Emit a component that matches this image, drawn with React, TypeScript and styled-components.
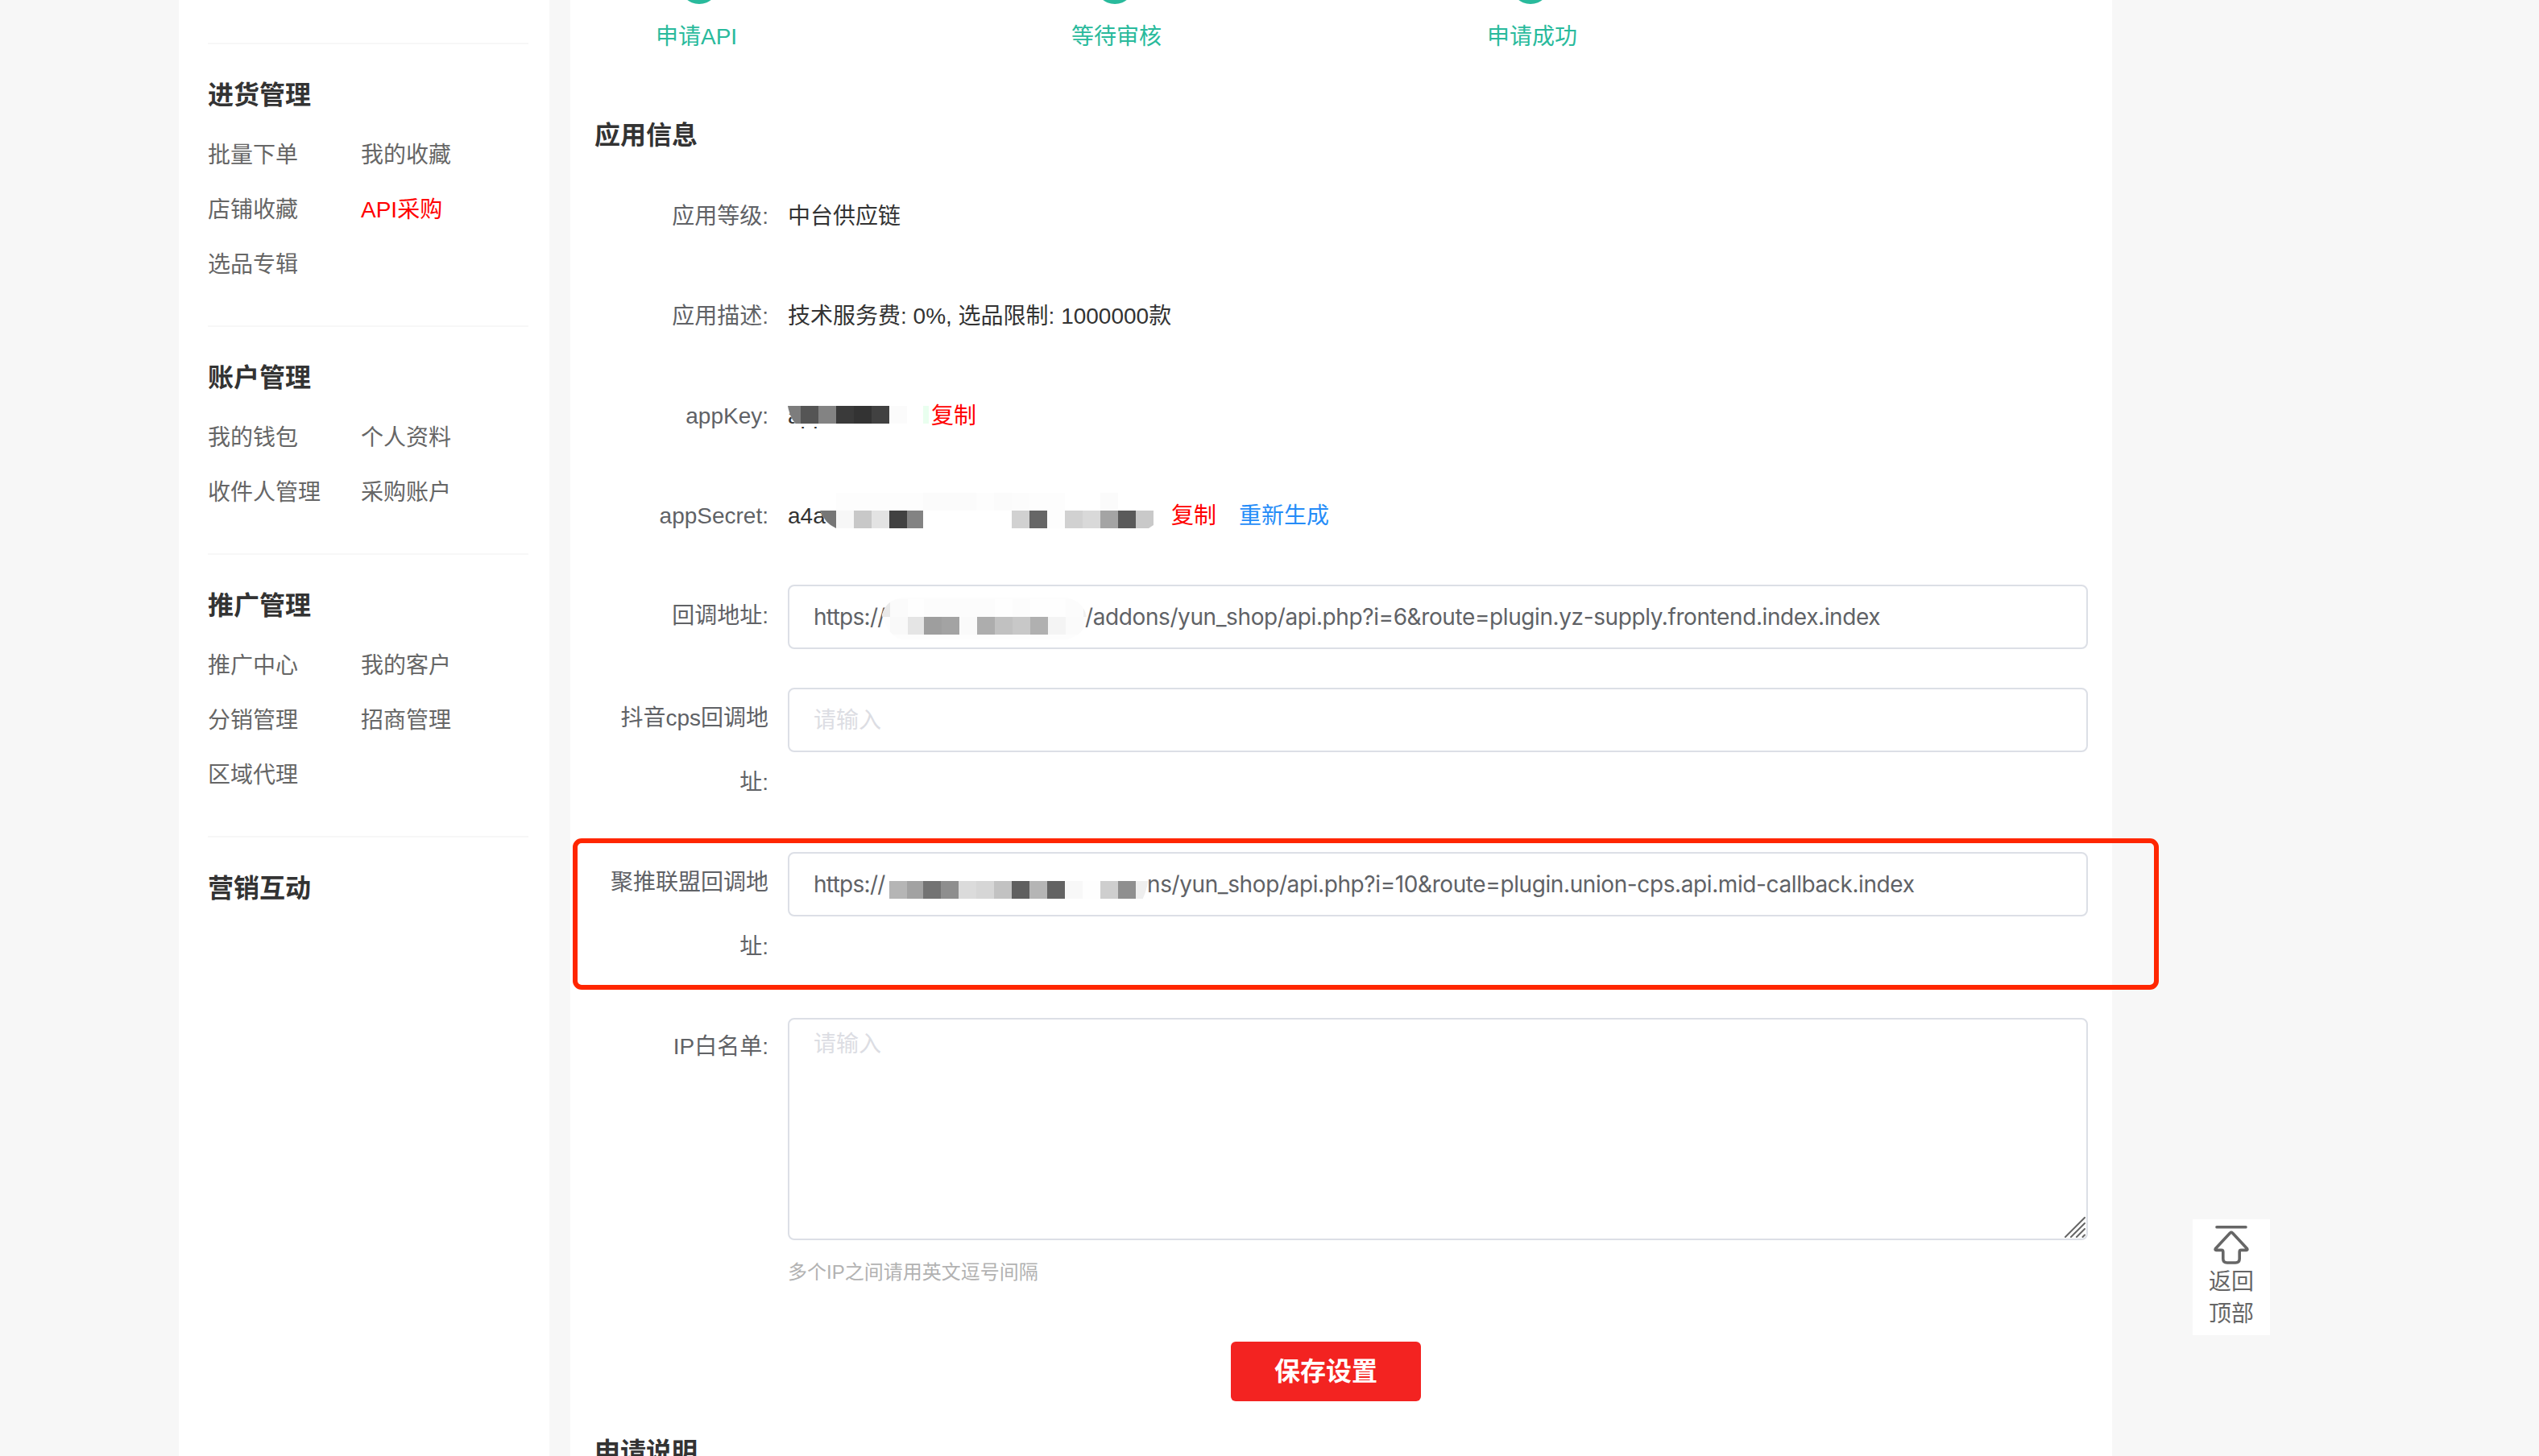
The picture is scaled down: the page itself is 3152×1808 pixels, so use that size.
import styled, { createGlobalStyle } from 'styled-components'

const GlobalStyle = createGlobalStyle`
  * {
    box-sizing: border-box;
  }

  body {
    margin: 0;
    background-color: #f7f7f7;
    color: #333;
    font-family: 'Liberation Sans', 'Noto Sans CJK SC', sans-serif;
    font-size: 28px;
  }
`

const Page = styled.div`
  position: relative;
  display: flex;
  gap: 26px;
  width: 3152px;
  height: 1808px;
  padding-left: 222px;
  overflow: hidden;
`

const Sidebar = styled.aside`
  width: 460px;
  height: 100%;
  padding: 53px 26px 0 36px;
  background-color: #fff;
`

const MenuSection = styled.section`
  padding: 41px 0;
  border-top: 2px solid #f7f7f7;
`

const MenuTitle = styled.h3`
  margin: 0 0 19px;
  font-size: 32px;
  font-weight: bold;
  line-height: 44px;
`

const MenuList = styled.div`
  display: grid;
  grid-template-columns: 190px 190px;
  grid-auto-rows: 68px;
`

const MenuLink = styled.a<{ $active?: boolean }>`
  color: ${(props) => (props.$active ? '#ff0000' : '#666')};
  line-height: 68px;
  white-space: nowrap;
`

const Main = styled.main`
  width: 1914px;
  height: 100%;
  padding: 0 30px;
  background-color: #fff;
`

const Steps = styled.div`
  display: flex;
  height: 146px;
  margin-left: 76px;
`

const Step = styled.div`
  width: 516px;
  color: #29ba9c;

  span {
    display: block;
    margin-top: 21px;
    line-height: 40px;
  }
`

const StepDot = styled.div`
  width: 48px;
  height: 48px;
  margin: -43px 0 0 30px;
  border-radius: 50%;
  background-color: #29ba9c;
`

const SectionTitle = styled.h2`
  margin: 0;
  font-size: 32px;
  font-weight: bold;
  line-height: 44px;
`

const Form = styled.div`
  padding-top: 39px;
`

const FormItem = styled.div`
  display: flex;
  margin-bottom: 44px;
`

const Label = styled.label`
  flex: none;
  width: 240px;
  padding-right: 24px;
  color: #606266;
  line-height: 80px;
  text-align: right;
`

const Value = styled.div`
  position: relative;
  display: flex;
  height: 80px;
  line-height: 80px;
`

const Action = styled.a<{ $color: string; $gap: number }>`
  margin-left: ${(props) => props.$gap}px;
  color: ${(props) => props.$color};
`

const MaskedText = styled.span<{ $width: number }>`
  width: ${(props) => props.$width}px;
`

const InputBox = styled.div<{ $offset: number }>`
  position: relative;
  display: flex;
  width: 1614px;
  height: 80px;
  margin: ${(props) => `${props.$offset}px 0 ${3 - props.$offset}px`};
  padding: 0 30px;
  border: 2px solid #dcdfe6;
  border-radius: 8px;
  color: #606266;
  font-family: Inter, 'Noto Sans CJK SC', sans-serif;
  letter-spacing: -0.4px;
  line-height: 77px;
  white-space: nowrap;
`

const UrlPrefix = styled.span<{ $width: number }>`
  flex: none;
  width: ${(props) => props.$width}px;
  letter-spacing: -0.7px;
`

const Input = styled.input`
  width: 100%;
  padding: 2px 0 0;
  border: 0;
  outline: 0;
  background: none;
  color: #606266;
  font: 28px 'Liberation Sans', 'Noto Sans CJK SC', sans-serif;

  &::placeholder {
    color: #dcdde3;
  }
`

const TextareaBox = styled.div`
  position: relative;
  width: 1614px;
  height: 276px;
  margin-top: 4px;
`

const Textarea = styled.textarea`
  display: block;
  width: 100%;
  height: 100%;
  padding: 10px 30px;
  border: 2px solid #dcdfe6;
  border-radius: 8px;
  outline: 0;
  resize: none;
  color: #606266;
  font: inherit;
  line-height: 42px;

  &::placeholder {
    color: #dcdde3;
  }
`

const ResizeGrip = styled.svg`
  position: absolute;
  right: 3px;
  bottom: 3px;
`

const Tip = styled.p`
  margin: 23px 0 0;
  color: #b2b2b2;
  font-size: 24px;
  line-height: 34px;
`

const SaveButton = styled.button`
  display: block;
  width: 236px;
  height: 74px;
  margin: 69px 0 41px 790px;
  padding: 0;
  border: 0;
  border-radius: 6px;
  background-color: #f32321;
  color: #fff;
  font: bold 32px / 74px 'Liberation Sans', 'Noto Sans CJK SC', sans-serif;
`

const Highlight = styled.div`
  position: absolute;
  top: 1041px;
  left: 711px;
  width: 1969px;
  height: 188px;
  border: 6px solid #ff2600;
  border-radius: 11px;
`

const BackTop = styled.div`
  position: absolute;
  top: 1514px;
  left: 2722px;
  display: flex;
  flex-direction: column;
  align-items: center;
  width: 96px;
  height: 144px;
  padding-top: 6px;
  background-color: #fff;
  color: #666;
  line-height: 40px;
  text-align: center;

  span {
    width: 56px;
  }
`

const MosaicSvg = styled.svg<{ $left: number; $top: number }>`
  position: absolute;
  top: ${(props) => props.$top}px;
  left: ${(props) => props.$left}px;
`

// [x, width, colour] of each block
type Cell = [number, number, string]

interface MosaicProps {
  id: string
  left: number
  top: number
  width: number
  height: number
  outline: string
  rowY: number
  cells: Cell[]
  upper?: Cell[]
  fill?: string
}

function Mosaic({
  id,
  left,
  top,
  width,
  height,
  outline,
  rowY,
  cells,
  upper = [],
  fill = '#fff',
}: MosaicProps) {
  return (
    <MosaicSvg $left={left} $top={top} width={width} height={height}>
      <clipPath id={id}>
        <path d={outline} />
      </clipPath>
      <g clipPath={`url(#${id})`} shapeRendering="crispEdges">
        <rect width={width} height={height} fill={fill} />
        {upper.map(([x, w, color]) => (
          <rect key={x} x={x} y={rowY - 22} width={w} height={22} fill={color} />
        ))}
        {cells.map(([x, w, color]) => (
          <rect key={x} x={x} y={rowY} width={w} height={22} fill={color} />
        ))}
      </g>
    </MosaicSvg>
  )
}

const keyCells: Cell[] = [
  [0, 16, '#7d7d7d'],
  [16, 22, '#555555'],
  [38, 22, '#838383'],
  [60, 22, '#3a3a3a'],
  [82, 22, '#333333'],
  [104, 22, '#414141'],
  [126, 22, '#fbfbfb'],
  [168, 7, '#e9ffef'],
]

const secretUpper: Cell[] = [
  [22, 108, '#fdfdfd'],
  [130, 66, '#fbfbfb'],
  [196, 22, '#fdfdfd'],
  [218, 22, '#fbfbfb'],
  [240, 22, '#fcfcfc'],
  [262, 44, '#fdfdfd'],
  [350, 22, '#fbfbfb'],
]

const secretCells: Cell[] = [
  [0, 22, '#767676'],
  [22, 22, '#f7f7f7'],
  [44, 22, '#c8c8c8'],
  [66, 22, '#e3e3e3'],
  [88, 22, '#414141'],
  [110, 20, '#838383'],
  [240, 22, '#d1d1d1'],
  [262, 22, '#666666'],
  [284, 22, '#fdfdfd'],
  [306, 22, '#d1d1d1'],
  [328, 22, '#d9d9d9'],
  [350, 22, '#a4a4a4'],
  [372, 22, '#5a5a5a'],
  [394, 22, '#c9c9c9'],
]

const callbackUpper: Cell[] = [
  [0, 10, '#e9e9e9'],
  [10, 22, '#fbfbfb'],
  [32, 20, '#fefefe'],
  [52, 88, '#fcfcfc'],
  [140, 22, '#fefefe'],
  [162, 22, '#fcfcfc'],
  [184, 44, '#fefefe'],
  [228, 22, '#fcfcfc'],
  [250, 6, '#f1f1f1'],
]

const callbackCells: Cell[] = [
  [10, 22, '#f9f9f9'],
  [32, 20, '#e5e5e5'],
  [52, 22, '#9e9e9e'],
  [74, 22, '#a3a3a3'],
  [96, 22, '#fafafa'],
  [118, 22, '#adadad'],
  [140, 22, '#c1c1c1'],
  [162, 22, '#c8c8c8'],
  [184, 22, '#b0b0b0'],
  [206, 22, '#f4f4f4'],
  [228, 22, '#fbfbfb'],
]

const unionCells: Cell[] = [
  [10, 22, '#b5b5b5'],
  [32, 20, '#a2a2a2'],
  [52, 22, '#737373'],
  [74, 22, '#8e8e8e'],
  [96, 22, '#dbdbdb'],
  [118, 22, '#d6d6d6'],
  [140, 22, '#c2c2c2'],
  [162, 22, '#5f5f5f'],
  [184, 22, '#b5b5b5'],
  [206, 22, '#636363'],
  [228, 22, '#f8f8f8'],
  [250, 22, '#fefefe'],
  [272, 22, '#cecece'],
  [294, 22, '#8f8f8f'],
  [316, 18, '#eeeeee'],
]

const menus = [
  {
    title: '进货管理',
    links: ['批量下单', '我的收藏', '店铺收藏', 'API采购', '选品专辑'],
  },
  {
    title: '账户管理',
    links: ['我的钱包', '个人资料', '收件人管理', '采购账户'],
  },
  {
    title: '推广管理',
    links: ['推广中心', '我的客户', '分销管理', '招商管理', '区域代理'],
  },
  { title: '营销互动', links: [] },
]

export default function App() {
  return (
    <Page>
      <GlobalStyle />
      <Sidebar>
        {menus.map((menu) => (
          <MenuSection key={menu.title}>
            <MenuTitle>{menu.title}</MenuTitle>
            <MenuList>
              {menu.links.map((link) => (
                <MenuLink key={link} $active={link === 'API采购'}>
                  {link}
                </MenuLink>
              ))}
            </MenuList>
          </MenuSection>
        ))}
      </Sidebar>

      <Main>
        <Steps>
          {['申请API', '等待审核', '申请成功'].map((step) => (
            <Step key={step}>
              <StepDot />
              <span>{step}</span>
            </Step>
          ))}
        </Steps>
        <SectionTitle>应用信息</SectionTitle>
        <Form>
          <FormItem>
            <Label>应用等级:</Label>
            <Value>中台供应链</Value>
          </FormItem>
          <FormItem>
            <Label>应用描述:</Label>
            <Value>技术服务费: 0%, 选品限制: 1000000款</Value>
          </FormItem>
          <FormItem>
            <Label>appKey:</Label>
            <Value>
              <MaskedText $width={178}>app</MaskedText>
              <Mosaic
                id="mask-key"
                left={0}
                top={27}
                width={176}
                height={26}
                outline="M0 0H176V26H14Q3 18 0 0Z"
                rowY={0}
                cells={keyCells}
              />
              <Action $color="#ff0000" $gap={0}>
                复制
              </Action>
            </Value>
          </FormItem>
          <FormItem>
            <Label>appSecret:</Label>
            <Value>
              <MaskedText $width={476}>a4a</MaskedText>
              <Mosaic
                id="mask-secret"
                left={38}
                top={11}
                width={416}
                height={44}
                outline="M22 0H416V40L410 44H22Q8 38 2 22Q6 8 22 0Z"
                rowY={22}
                cells={secretCells}
                upper={secretUpper}
              />
              <Action $color="#ff0000" $gap={0}>
                复制
              </Action>
              <Action $color="#258cf8" $gap={28}>
                重新生成
              </Action>
            </Value>
          </FormItem>
          <FormItem>
            <Label>回调地址:</Label>
            <InputBox $offset={1}>
              <UrlPrefix $width={337}>https://</UrlPrefix>
              /addons/yun_shop/api.php?i=6&amp;route=plugin.yz-supply.frontend.index.index
              <Mosaic
                id="mask-callback"
                left={115}
                top={14}
                width={256}
                height={52}
                outline="M24 0H230Q252 6 254 26Q252 46 230 52H24Q8 48 0 22Q4 4 24 0Z"
                rowY={24}
                cells={callbackCells}
                upper={callbackUpper}
                fill="#fdfdfd"
              />
            </InputBox>
          </FormItem>
          <FormItem>
            <Label>抖音cps回调地址:</Label>
            <InputBox $offset={2}>
              <Input placeholder="请输入" />
            </InputBox>
          </FormItem>
          <FormItem>
            <Label>聚推联盟回调地址:</Label>
            <InputBox $offset={2}>
              <UrlPrefix $width={414}>https://</UrlPrefix>
              ns/yun_shop/api.php?i=10&amp;route=plugin.union-cps.api.mid-callback.index
              <Mosaic
                id="mask-union"
                left={114}
                top={14}
                width={334}
                height={44}
                outline="M10 0H332Q334 22 324 44H4L0 34Z"
                rowY={20}
                cells={unionCells}
              />
            </InputBox>
          </FormItem>
          <FormItem>
            <Label>IP白名单:</Label>
            <div>
              <TextareaBox>
                <Textarea placeholder="请输入" />
                <ResizeGrip
                  width="26"
                  height="26"
                  viewBox="0 0 26 26"
                  stroke="#666"
                  strokeWidth="2"
                  strokeLinecap="round"
                >
                  <path d="M1 25L25 1M8 25L25 8M15 25L25 15M22.5 25L25 22.5" />
                </ResizeGrip>
              </TextareaBox>
              <Tip>多个IP之间请用英文逗号间隔</Tip>
            </div>
          </FormItem>
        </Form>
        <SaveButton>保存设置</SaveButton>
        <SectionTitle>申请说明</SectionTitle>
      </Main>

      <Highlight />

      <BackTop>
        <svg
          width="48"
          height="52"
          viewBox="0 0 48 52"
          fill="none"
          stroke="#666"
          strokeWidth="3.6"
          strokeLinecap="round"
          strokeLinejoin="round"
        >
          <path d="M6 3.7H42" />
          <path d="M22.3 11.2Q24 9.6 25.7 11.2L43.6 30.5Q44.6 32.2 42.6 32.4H36Q34.2 32.4 34.2 34.4V43Q34.2 48 29.2 48H18.8Q13.8 48 13.8 43V34.4Q13.8 32.4 12 32.4H5.4Q3.4 32.2 4.4 30.5Z" />
        </svg>
        <span>返回顶部</span>
      </BackTop>
    </Page>
  )
}
